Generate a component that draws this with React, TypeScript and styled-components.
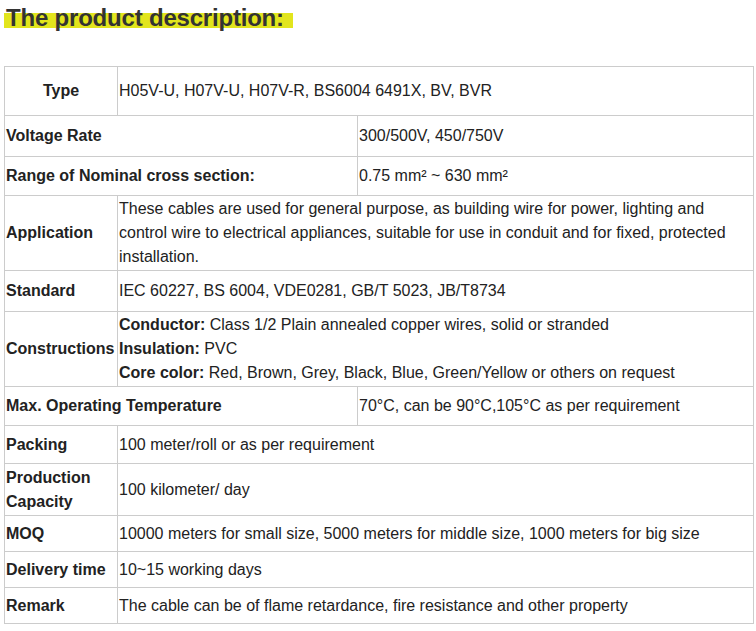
import React from "react";
import styled, { createGlobalStyle } from "styled-components";

const Global = createGlobalStyle`
  html, body { margin: 0; padding: 0; background: #fff; }
  body { font-family: "Liberation Sans", Arial, sans-serif; color: #222; }
`;

const Page = styled.div`
  padding: 0 0 0 4px;
  width: 749px;
`;

const Heading = styled.h2`
  margin: 0;
  padding-top: 4px;
  height: 66px;
  box-sizing: border-box;
  font-size: 24px;
  line-height: 28px;
  font-weight: bold;
  letter-spacing: -0.2px;
  color: #333;
`;

const Mark = styled.span`
  display: inline-block;
  padding: 0 9px 0 2px;
  background: linear-gradient(to bottom, transparent 0, transparent 9px, #e2e51d 9px, #e2e51d 24px, transparent 24px);
`;

const Table = styled.table`
  border-collapse: collapse;
  table-layout: fixed;
  width: 749px;
  font-size: 16px;
  line-height: 24px;
  color: #222;
`;

const Row = styled.tr<{ $h: number }>`
  height: ${(p) => p.$h}px;
`;

const Cell = styled.td<{ $center?: boolean; $bold?: boolean }>`
  border: 1px solid #ccc;
  padding: 0 1px;
  vertical-align: middle;
  text-align: ${(p) => (p.$center ? "center" : "left")};
  font-weight: ${(p) => (p.$bold ? "bold" : "normal")};
`;

const Label = styled.b`
  font-weight: bold;
`;

type Item =
  | { kind: "a"; label: string; value: React.ReactNode; h: number; center?: boolean }
  | { kind: "b"; label: string; value: React.ReactNode; h: number };

const rows: Item[] = [
  { kind: "a", label: "Type", value: "H05V-U, H07V-U, H07V-R, BS6004 6491X, BV, BVR", h: 49, center: true },
  { kind: "b", label: "Voltage Rate", value: "300/500V, 450/750V", h: 41 },
  { kind: "b", label: "Range of Nominal cross section:", value: "0.75 mm² ~ 630 mm²", h: 39 },
  {
    kind: "a",
    label: "Application",
    value:
      "These cables are used for general purpose, as building wire for power, lighting and control wire to electrical appliances, suitable for use in conduit and for fixed, protected installation.",
    h: 75,
  },
  { kind: "a", label: "Standard", value: "IEC 60227, BS 6004, VDE0281, GB/T 5023, JB/T8734", h: 41 },
  {
    kind: "a",
    label: "Constructions",
    value: (
      <>
        <Label>Conductor:</Label> Class 1/2 Plain annealed copper wires, solid or stranded
        <br />
        <Label>Insulation:</Label> PVC
        <br />
        <Label>Core color:</Label> Red, Brown, Grey, Black, Blue, Green/Yellow or others on request
      </>
    ),
    h: 75,
  },
  { kind: "b", label: "Max. Operating Temperature", value: "70°C, can be 90°C,105°C as per requirement", h: 39 },
  { kind: "a", label: "Packing", value: "100 meter/roll or as per requirement", h: 38 },
  { kind: "a", label: "Production Capacity", value: "100 kilometer/ day", h: 52 },
  { kind: "a", label: "MOQ", value: "10000 meters for small size, 5000 meters for middle size, 1000 meters for big size", h: 36 },
  { kind: "a", label: "Delivery time", value: "10~15 working days", h: 36 },
  { kind: "a", label: "Remark", value: "The cable can be of flame retardance, fire resistance and other property", h: 36 },
];

export default function App() {
  return (
    <>
      <Global />
      <Page>
        <Heading>
          <Mark>The product description:</Mark>
        </Heading>
        <Table>
          <colgroup>
            <col style={{ width: 113 }} />
            <col style={{ width: 240 }} />
            <col style={{ width: 396 }} />
          </colgroup>
          <tbody>
            {rows.map((r) =>
              r.kind === "a" ? (
                <Row key={r.label} $h={r.h}>
                  <Cell $bold $center={r.center}>
                    {r.label}
                  </Cell>
                  <Cell colSpan={2}>{r.value}</Cell>
                </Row>
              ) : (
                <Row key={r.label} $h={r.h}>
                  <Cell $bold colSpan={2}>
                    {r.label}
                  </Cell>
                  <Cell>{r.value}</Cell>
                </Row>
              )
            )}
          </tbody>
        </Table>
      </Page>
    </>
  );
}
